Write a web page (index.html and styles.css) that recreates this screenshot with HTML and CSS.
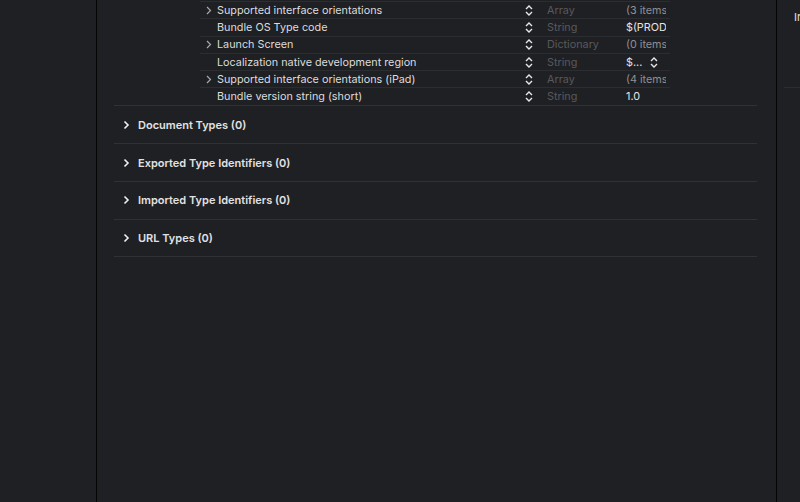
FILE: index.html
```html
<!DOCTYPE html>
<html>
<head>
<meta charset="utf-8">
<link rel="stylesheet" href="styles.css">
</head>
<body>
<div class="app">
  <aside class="nav"></aside>
  <main class="editor">
    <section class="info">
      <div class="plist">
        <div class="row"><span class="disc"><svg width="6" height="9" viewBox="0 0 6 9"><path d="M1 1l3.5 3.5L1 8" fill="none" stroke="#a9a9ab" stroke-width="1.2"/></svg></span><span class="key">Supported interface orientations</span><span class="step"><svg width="8" height="11" viewBox="0 0 8 11"><path d="M1 4l3-3 3 3M1 7l3 3 3-3" fill="none" stroke="#e8e8ea" stroke-width="1.4"/></svg></span><span class="type">Array</span><span class="val dim">(3 items)</span></div>
        <div class="row"><span class="disc"></span><span class="key">Bundle OS Type code</span><span class="step"><svg width="8" height="11" viewBox="0 0 8 11"><path d="M1 4l3-3 3 3M1 7l3 3 3-3" fill="none" stroke="#e8e8ea" stroke-width="1.4"/></svg></span><span class="type">String</span><span class="val">$(PRODUCT_BUNDLE_PACKAGE_TYPE)</span></div>
        <div class="row"><span class="disc"><svg width="6" height="9" viewBox="0 0 6 9"><path d="M1 1l3.5 3.5L1 8" fill="none" stroke="#a9a9ab" stroke-width="1.2"/></svg></span><span class="key">Launch Screen</span><span class="step"><svg width="8" height="11" viewBox="0 0 8 11"><path d="M1 4l3-3 3 3M1 7l3 3 3-3" fill="none" stroke="#e8e8ea" stroke-width="1.4"/></svg></span><span class="type">Dictionary</span><span class="val dim">(0 items)</span></div>
        <div class="row"><span class="disc"></span><span class="key">Localization native development region</span><span class="step"><svg width="8" height="11" viewBox="0 0 8 11"><path d="M1 4l3-3 3 3M1 7l3 3 3-3" fill="none" stroke="#e8e8ea" stroke-width="1.4"/></svg></span><span class="type">String</span><span class="val pop"><span class="short">$...</span><svg width="8" height="11" viewBox="0 0 8 11"><path d="M1 4l3-3 3 3M1 7l3 3 3-3" fill="none" stroke="#e8e8ea" stroke-width="1.4"/></svg></span></div>
        <div class="row"><span class="disc"><svg width="6" height="9" viewBox="0 0 6 9"><path d="M1 1l3.5 3.5L1 8" fill="none" stroke="#a9a9ab" stroke-width="1.2"/></svg></span><span class="key">Supported interface orientations (iPad)</span><span class="step"><svg width="8" height="11" viewBox="0 0 8 11"><path d="M1 4l3-3 3 3M1 7l3 3 3-3" fill="none" stroke="#e8e8ea" stroke-width="1.4"/></svg></span><span class="type">Array</span><span class="val dim">(4 items)</span></div>
        <div class="row last"><span class="disc"></span><span class="key">Bundle version string (short)</span><span class="step"><svg width="8" height="11" viewBox="0 0 8 11"><path d="M1 4l3-3 3 3M1 7l3 3 3-3" fill="none" stroke="#e8e8ea" stroke-width="1.4"/></svg></span><span class="type">String</span><span class="val">1.0</span></div>
      </div>
    </section>
    <section class="group"><span class="chev"><svg width="7" height="10" viewBox="0 0 7 10"><path d="M1.5 1.5L5 5l-3.5 3.5" fill="none" stroke="#f0f0f2" stroke-width="1.6"/></svg></span><span class="title">Document Types (0)</span></section>
    <section class="group"><span class="chev"><svg width="7" height="10" viewBox="0 0 7 10"><path d="M1.5 1.5L5 5l-3.5 3.5" fill="none" stroke="#f0f0f2" stroke-width="1.6"/></svg></span><span class="title">Exported Type Identifiers (0)</span></section>
    <section class="group"><span class="chev"><svg width="7" height="10" viewBox="0 0 7 10"><path d="M1.5 1.5L5 5l-3.5 3.5" fill="none" stroke="#f0f0f2" stroke-width="1.6"/></svg></span><span class="title">Imported Type Identifiers (0)</span></section>
    <section class="group"><span class="chev"><svg width="7" height="10" viewBox="0 0 7 10"><path d="M1.5 1.5L5 5l-3.5 3.5" fill="none" stroke="#f0f0f2" stroke-width="1.6"/></svg></span><span class="title">URL Types (0)</span></section>
  </main>
  <aside class="inspector">
    <div class="insp-head"><span class="insp-label">In</span></div>
  </aside>
</div>
</body>
</html>
```

FILE: styles.css
```css
* { box-sizing: border-box; }
html, body {
  margin: 0;
  padding: 0;
  width: 800px;
  height: 502px;
  overflow: hidden;
  background: #1f2023;
  font-family: Inter, "Liberation Sans", Arial, sans-serif;
  font-size: 11px;
  color: #dedee0;
}
.app {
  display: flex;
  width: 800px;
  height: 502px;
}
.nav {
  width: 97px;
  flex: none;
  background: #1f2023;
  border-right: 1px solid #050506;
}
.editor {
  width: 680px;
  flex: none;
  background: #1f2023;
  border-right: 1px solid #050506;
  padding: 0 19px 0 17px;
  display: flex;
  flex-direction: column;
}
.info {
  padding: 1px 0 0 86px;
  border-bottom: 1px solid #303134;
}
.plist {
  width: 470px;
  border-top: 1px solid #2c2d30;
  overflow: hidden;
}
.row {
  display: flex;
  align-items: center;
  height: 17.3px;
  border-bottom: 1px solid #2c2d30;
  white-space: nowrap;
  font-size: 10.8px;
}
.row.last { border-bottom: none; height: 17px; }
.disc {
  width: 17px;
  flex: none;
  display: flex;
  justify-content: center;
}
.key {
  width: 308px;
  flex: none;
  color: #dcdcde;
  overflow: hidden;
}
.step {
  width: 22px;
  flex: none;
  display: flex;
  align-items: center;
}
.type {
  width: 79px;
  flex: none;
  color: #58595d;
}
.val {
  width: 40px;
  flex: none;
  overflow: hidden;
  color: #e4e4e6;
}
.val.dim { color: #8f8f93; }
.val.pop {
  display: flex;
  align-items: center;
  overflow: visible;
  width: 44px;
}
.short { width: 24px; }
.group {
  height: 37.7px;
  flex: none;
  display: flex;
  align-items: center;
  border-bottom: 1px solid #303134;
  padding-left: 9px;
}
.chev {
  width: 15px;
  display: flex;
  align-items: center;
}
.title {
  font-weight: 600;
  color: #e2e2e4;
}
.inspector {
  flex: 1;
  background: #1f2023;
  overflow: hidden;
}
.insp-head {
  margin-left: 7px;
  height: 88px;
  border-bottom: 1px solid #2c2d30;
  padding: 10px 0 0 10px;
  white-space: nowrap;
}
.insp-label { color: #e2e2e4; font-size: 11px; }
```
